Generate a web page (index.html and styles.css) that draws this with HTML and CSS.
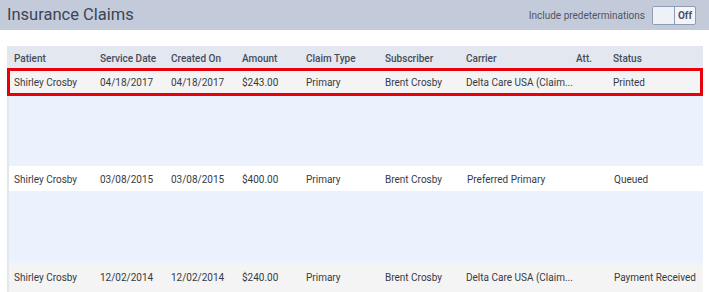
FILE: index.html
```html
<!DOCTYPE html>
<html lang="en">
<head>
  <meta charset="UTF-8" />
  <title>Insurance Claims</title>
  <link rel="stylesheet" href="styles.css">
</head>
<body>

  <div class="topbar">
    <h1>Insurance Claims</h1>
    <div class="predet">
      <span>Include predeterminations</span>
      <div class="toggle"><span class="knob"></span><span class="state">Off</span></div>
    </div>
  </div>

  <div class="claims">
    <div class="row head">
      <div>Patient</div>
      <div>Service Date</div>
      <div>Created On</div>
      <div>Amount</div>
      <div>Claim Type</div>
      <div>Subscriber</div>
      <div>Carrier</div>
      <div>Att.</div>
      <div>Status</div>
    </div>

    <div class="row grey selected">
      <div>Shirley Crosby</div>
      <div>04/18/2017</div>
      <div>04/18/2017</div>
      <div>$243.00</div>
      <div>Primary</div>
      <div>Brent Crosby</div>
      <div>Delta Care USA (Claim...</div>
      <div></div>
      <div>Printed</div>
    </div>
    <div class="detail d1"></div>

    <div class="row white">
      <div>Shirley Crosby</div>
      <div>03/08/2015</div>
      <div>03/08/2015</div>
      <div>$400.00</div>
      <div>Primary</div>
      <div>Brent Crosby</div>
      <div class="nudge">Preferred Primary</div>
      <div></div>
      <div class="nudge">Queued</div>
    </div>
    <div class="detail d2"></div>

    <div class="row grey last">
      <div>Shirley Crosby</div>
      <div>12/02/2014</div>
      <div>12/02/2014</div>
      <div>$240.00</div>
      <div>Primary</div>
      <div>Brent Crosby</div>
      <div>Delta Care USA (Claim...</div>
      <div></div>
      <div class="nudge">Payment Received</div>
    </div>
  </div>

</body>
</html>
```

FILE: styles.css
```css
body {
  margin: 0;
  font-family: Roboto, 'Liberation Sans', sans-serif;
  background: #ffffff;
  color: #363b43;
}

.topbar {
  height: 30px;
  background: #c3cbdb;
  display: flex;
  align-items: center;
  justify-content: space-between;
  padding: 0 13px 0 7px;
}

.topbar h1 {
  margin: 0;
  font-size: 16.5px;
  font-weight: 400;
  color: #3b4556;
  line-height: 30px;
}

.predet {
  display: flex;
  align-items: center;
  gap: 7px;
  font-size: 10px;
  color: #4e5664;
}

.toggle {
  display: flex;
  width: 44px;
  height: 19px;
  box-sizing: border-box;
  border: 1px solid #8e9db3;
  border-radius: 2px;
  background: #f4f5f8;
  overflow: hidden;
}

.toggle .knob {
  width: 21px;
  background: #eef1f8;
  border-right: 1px solid #8e9db3;
}

.toggle .state {
  flex: 1;
  text-align: center;
  font-size: 10px;
  font-weight: 700;
  color: #4a5262;
  line-height: 17px;
}

.claims {
  margin: 16px 6px 0 7px;
  border-left: 2px solid #e3e7ee;
  background: #ecf2fd;
}

.row {
  display: grid;
  grid-template-columns: 86px 71px 71px 64px 79px 81px 110px 37px 1fr;
  align-items: center;
  padding-left: 5px;
  font-size: 10px;
  white-space: nowrap;
}

.row.head {
  height: 22px;
  padding-top: 3px;
  box-sizing: border-box;
  background: #e3e7ef;
  font-weight: 500;
  color: #454d5b;
}

.row.grey {
  background: #f4f4f4;
}

.row.white {
  background: #ffffff;
  height: 25px;
  padding-top: 1px;
  box-sizing: border-box;
}

.row.selected {
  height: 28px;
  box-sizing: border-box;
  border: 3px solid #e8000b;
  margin-left: -2px;
  padding-left: 4px;
  padding-top: 1px;
}

.row.last {
  height: 29px;
}

.nudge {
  padding-left: 1px;
}

.detail.d1 {
  height: 70px;
}

.detail.d2 {
  height: 72px;
}
```
